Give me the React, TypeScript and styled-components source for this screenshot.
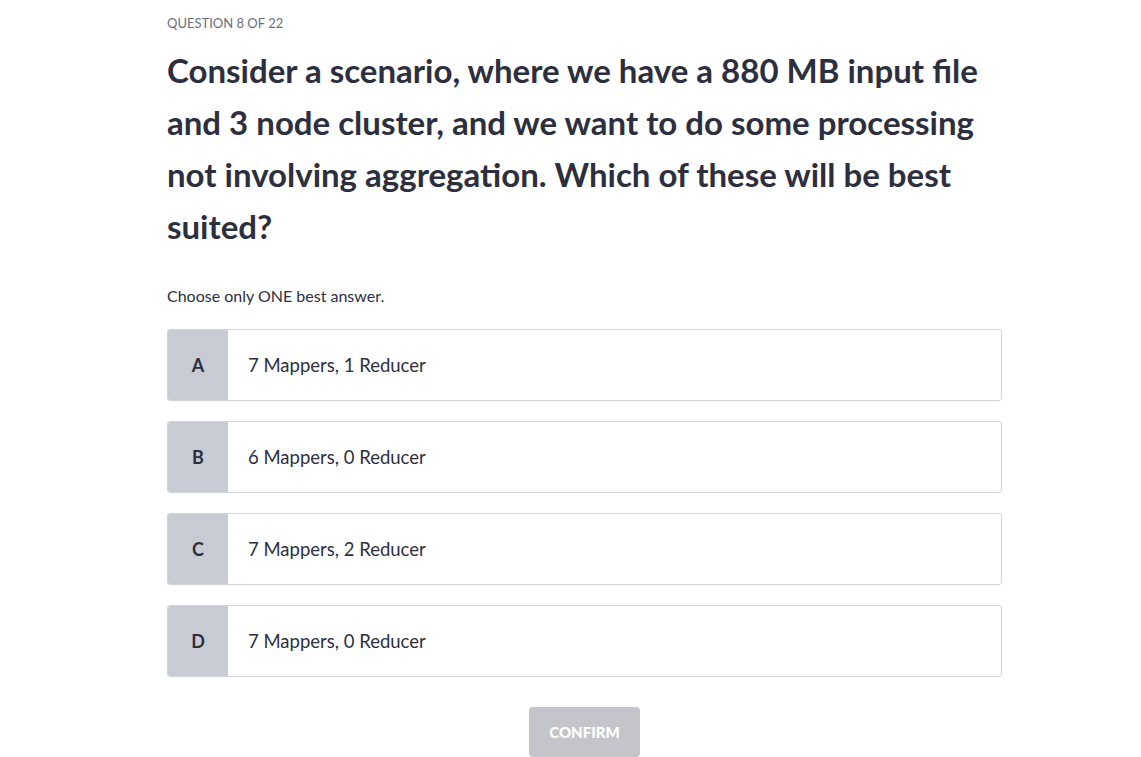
import React from "react";
import styled, { createGlobalStyle } from "styled-components";

const GlobalStyle = createGlobalStyle`
  body {
    margin: 0;
    background: #ffffff;
    font-family: "Source Sans Pro", Lato, "Noto Sans", sans-serif;
    color: #2d2f3f;
  }
`;

const Page = styled.div`
  display: flex;
  justify-content: center;
  padding: 14px 0 0 28px;
`;

const Quiz = styled.div`
  width: 835px;
  display: flex;
  flex-direction: column;
`;

const Counter = styled.div`
  font-size: 13px;
  line-height: 18px;
  color: #6b6f7b;
  text-transform: uppercase;
`;

const Question = styled.h1`
  margin: 12px 0 0;
  font-size: 33px;
  font-weight: 700;
  line-height: 52px;
  color: #2d2f3f;
`;

const Hint = styled.p`
  margin: 34px 0 0;
  font-size: 16px;
  line-height: 20px;
  color: #2d2f3f;
`;

const Options = styled.div`
  display: flex;
  flex-direction: column;
  gap: 20px;
  margin-top: 23px;
`;

const Option = styled.button`
  display: flex;
  align-items: stretch;
  height: 72px;
  padding: 0;
  border: 1px solid #d3d4d9;
  border-radius: 3px;
  background: #ffffff;
  overflow: hidden;
  cursor: pointer;
  font-family: inherit;
  text-align: left;
`;

const Letter = styled.span`
  flex: 0 0 60px;
  display: flex;
  align-items: center;
  justify-content: center;
  background: #c9cbd4;
  font-size: 18px;
  font-weight: 700;
  color: #2d2f3f;
`;

const Answer = styled.span`
  display: flex;
  align-items: center;
  padding-left: 20px;
  font-size: 18.5px;
  color: #2d2f3f;
`;

const Footer = styled.div`
  display: flex;
  justify-content: center;
  margin-top: 30px;
`;

const ConfirmButton = styled.button`
  width: 111px;
  height: 50px;
  border: none;
  border-radius: 4px;
  background: #c4c5ca;
  color: #ffffff;
  font-family: inherit;
  font-size: 15px;
  font-weight: 900;
  text-transform: uppercase;
  cursor: not-allowed;
`;

const answers = [
  { letter: "A", text: "7 Mappers, 1 Reducer" },
  { letter: "B", text: "6 Mappers, 0 Reducer" },
  { letter: "C", text: "7 Mappers, 2 Reducer" },
  { letter: "D", text: "7 Mappers, 0 Reducer" },
];

export default function App() {
  return (
    <>
      <GlobalStyle />
      <Page>
        <Quiz>
          <Counter>Question 8 of 22</Counter>
          <Question>
            Consider a scenario, where we have a 880 MB input file and 3 node
            cluster, and we want to do some processing not involving
            aggregation. Which of these will be best suited?
          </Question>
          <Hint>Choose only ONE best answer.</Hint>
          <Options>
            {answers.map((a) => (
              <Option key={a.letter}>
                <Letter>{a.letter}</Letter>
                <Answer>{a.text}</Answer>
              </Option>
            ))}
          </Options>
          <Footer>
            <ConfirmButton disabled>Confirm</ConfirmButton>
          </Footer>
        </Quiz>
      </Page>
    </>
  );
}
